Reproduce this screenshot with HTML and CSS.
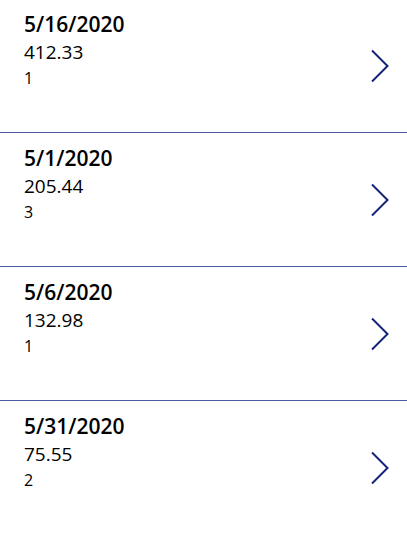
FILE: index.html
```html
<!DOCTYPE html>
<html>
<head>
<meta charset="utf-8">
<link rel="stylesheet" href="styles.css">
</head>
<body>
<ul class="list">
  <li class="row">
    <div class="info">
      <div class="title">5/16/2020</div>
      <div class="value">412.33</div>
      <div class="count">1</div>
    </div>
    <svg class="chev" width="20" height="34" viewBox="0 0 20 34"><path d="M2 1.5 L17.5 17 L2 32.5" fill="none" stroke="#13237a" stroke-width="2"/></svg>
  </li>
  <li class="row">
    <div class="info">
      <div class="title">5/1/2020</div>
      <div class="value">205.44</div>
      <div class="count">3</div>
    </div>
    <svg class="chev" width="20" height="34" viewBox="0 0 20 34"><path d="M2 1.5 L17.5 17 L2 32.5" fill="none" stroke="#13237a" stroke-width="2"/></svg>
  </li>
  <li class="row">
    <div class="info">
      <div class="title">5/6/2020</div>
      <div class="value">132.98</div>
      <div class="count">1</div>
    </div>
    <svg class="chev" width="20" height="34" viewBox="0 0 20 34"><path d="M2 1.5 L17.5 17 L2 32.5" fill="none" stroke="#13237a" stroke-width="2"/></svg>
  </li>
  <li class="row">
    <div class="info">
      <div class="title">5/31/2020</div>
      <div class="value">75.55</div>
      <div class="count">2</div>
    </div>
    <svg class="chev" width="20" height="34" viewBox="0 0 20 34"><path d="M2 1.5 L17.5 17 L2 32.5" fill="none" stroke="#13237a" stroke-width="2"/></svg>
  </li>
</ul>
</body>
</html>
```
FILE: styles.css
```css
* { box-sizing: border-box; }
html, body { margin: 0; padding: 0; background: #fff; }
body { font-family: "Open Sans", "Noto Sans", sans-serif; color: #000; overflow: hidden; }
.list { list-style: none; margin: -1px 0 0; padding: 0; }
.row {
  height: 134px;
  border-bottom: 1px solid #4a5aa0;
  display: flex;
  align-items: center;
  justify-content: space-between;
  padding: 0 17px 0 24px;
}
.row:last-child { border-bottom: none; }
.info { align-self: flex-start; padding-top: 11px; }
.title { font-size: 21px; line-height: 28px; font-weight: 600; }
.value { font-size: 19px; line-height: 25px; margin-top: 2px; }
.count { font-size: 16px; line-height: 22px; margin-top: 2px; }
.chev { display: block; }
```
